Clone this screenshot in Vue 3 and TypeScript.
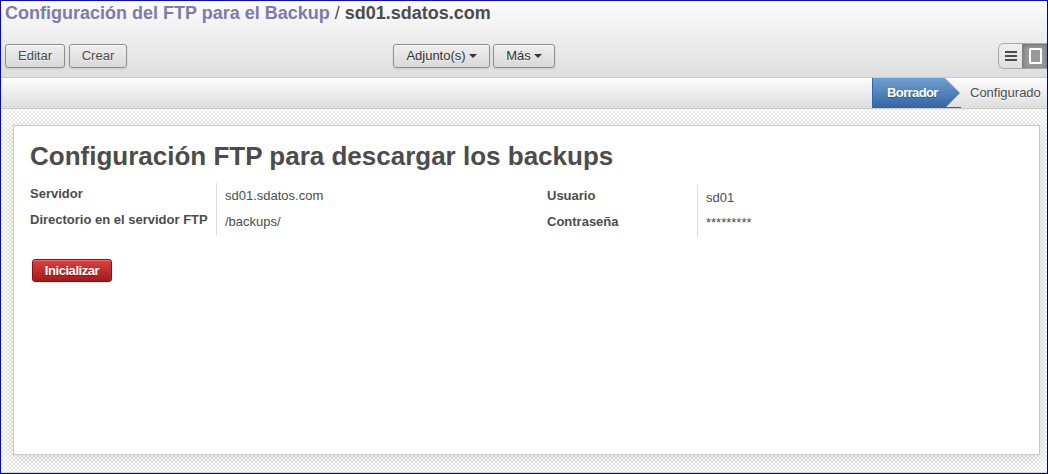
<script setup lang="ts">
interface Field { label: string; value: string; masked?: boolean }
interface Group { name: string; fields: Field[] }

const groups: Group[] = [
  {
    name: 'server',
    fields: [
      { label: 'Servidor', value: 'sd01.sdatos.com' },
      { label: 'Directorio en el servidor FTP', value: '/backups/' },
    ],
  },
  {
    name: 'user',
    fields: [
      { label: 'Usuario', value: 'sd01' },
      { label: 'Contraseña', value: '*********', masked: true },
    ],
  },
]
</script>

<template>
  <div class="window">
    <header class="header">
      <h2 class="crumbs">
        <a class="crumb-link">Configuración del FTP para el Backup</a>
        <span class="slash"> / </span><span>sd01.sdatos.com</span>
      </h2>
      <div class="toolbar">
        <div class="actions">
          <button class="btn edit">Editar</button>
          <button class="btn create">Crear</button>
        </div>
        <div class="menus">
          <button class="btn dark attach"><span>Adjunto(s)</span><i class="caret"></i></button>
          <button class="btn dark more"><span>Más</span><i class="caret"></i></button>
        </div>
        <div class="switcher">
          <span class="view list">
            <svg width="12" height="10" viewBox="0 0 12 10"><path d="M0 1h12M0 5h12M0 9h12" stroke="#4c4c4c" stroke-width="2" /></svg>
          </span>
          <span class="view form">
            <svg width="13" height="16" viewBox="0 0 13 16"><rect x="1" y="1" width="11" height="14" rx=".5" fill="none" stroke="#fff" stroke-width="2" /></svg>
          </span>
        </div>
      </div>
    </header>
    <div class="statusbar">
      <div class="stage active">
        <svg class="arrow" width="90" height="30" viewBox="0 0 90 30">
          <defs>
            <linearGradient id="stage" x1="0" y1="0" x2="0" y2="1">
              <stop offset="0" stop-color="#729fcf" />
              <stop offset="1" stop-color="#3465a4" />
            </linearGradient>
          </defs>
          <path d="M0 0H73L88 15L74 29H89V30H0Z" fill="url(#stage)" />
          <path d="M.5 0V30M0 29.5H89" stroke="#3465a4" fill="none" />
        </svg>
        <span class="stage-name">Borrador</span>
      </div>
      <div class="stage next">Configurado</div>
    </div>
    <main class="canvas">
      <section class="sheet">
        <h1>Configuración FTP para descargar los backups</h1>
        <div class="groups">
          <div v-for="g in groups" :key="g.name" class="group" :class="g.name">
            <div class="labels">
              <div v-for="f in g.fields" :key="f.label"><span>{{ f.label }}</span></div>
            </div>
            <div class="values">
              <div v-for="f in g.fields" :key="f.label" :class="{ masked: f.masked }">{{ f.value }}</div>
            </div>
          </div>
        </div>
        <button class="init">Inicializar</button>
      </section>
    </main>
  </div>
</template>

<style>
body { overflow: hidden; }
</style>

<style scoped>
* { box-sizing: border-box; }
.window {
  width: 1048px;
  height: 474px;
  overflow: hidden;
  border: 1px solid #00f;
  border-right-color: #0000a8;
  border-bottom-color: #0000a8;
  font: 13px/20px "Liberation Sans", Arial, sans-serif;
  color: #4c4c4c;
  display: flex;
  flex-direction: column;
}
.header {
  height: 77px;
  flex: none;
  border-bottom: 1px solid #cacaca;
  background: linear-gradient(#fcfcfc, #dedede);
}
.crumbs {
  margin: 0;
  padding: 2px 0 0 4px;
  height: 42px;
  font-size: 18px;
  line-height: 20px;
  white-space: nowrap;
}
.crumb-link { color: #7c7bad; }
.slash { font-weight: normal; white-space: pre; }
.toolbar {
  display: grid;
  grid-template-columns: 388px 1fr 50px;
  padding-left: 4px;
}
.actions, .menus { display: flex; gap: 4px; padding-top: 1px; }
.menus { gap: 3px; }
.btn {
  height: 24px;
  padding: 0;
  border: 1px solid #8e8e8e;
  border-radius: 3px;
  background: linear-gradient(#efefef, #d8d8d8);
  box-shadow: 0 1px 2px rgba(0, 0, 0, .12), inset 0 1px 1px rgba(255, 255, 255, .75);
  font: 13px/20px "Liberation Sans", Arial, sans-serif;
  color: #4c4c4c;
  text-shadow: 0 1px 1px rgba(255, 255, 255, .5);
  display: flex;
  align-items: center;
  justify-content: center;
  gap: 3px;
}
.edit { width: 60px; }
.create { width: 58px; }
.attach { width: 97px; }
.more { width: 62px; }
.dark { color: #333; }
.caret {
  border: 4px solid transparent;
  border-top-color: #333;
  border-bottom: 0;
}
.switcher {
  height: 26px;
  display: flex;
  border: 1px solid #a8a8a8;
  border-right: 0;
  border-radius: 6px 0 0 6px;
  overflow: hidden;
  margin-left: 1px;
}
.view { display: flex; align-items: center; justify-content: center; }
.list { width: 23px; background: linear-gradient(#efefef, #dfdfdf); }
.form {
  flex: 1;
  border-left: 1px solid #808080;
  background: #999;
  box-shadow: inset 0 1px 4px rgba(0, 0, 0, .3);
}
.statusbar {
  height: 31px;
  flex: none;
  display: flex;
  justify-content: flex-end;
  border-bottom: 1px solid #cacaca;
  background: linear-gradient(#fcfcfc, #dedede);
  line-height: 30px;
}
.active {
  width: 98px;
  display: grid;
  color: #fff;
  font-weight: bold;
  text-shadow: 0 1px 1px rgba(0, 0, 0, .3);
}
.arrow, .stage-name { grid-area: 1 / 1; }
.stage-name { padding-left: 15px; z-index: 1; letter-spacing: -.6px; }
.next { width: 77px; text-shadow: 0 1px 1px #fff; }
.canvas {
  flex: 1;
  padding: 16px 7px 0 12px;
  background: repeating-conic-gradient(#e9e9e9 0 25%, #fff 0 50%) 0 0 / 4px 4px;
  border-bottom: 1px solid #d5d5d5;
}
.sheet {
  height: 330px;
  padding: 15px 16px 0;
  border: 1px solid #c8c8d3;
  background: #fff;
  box-shadow: 0 4px 14px rgba(0, 0, 0, .12);
}
h1 {
  margin: 0;
  font-size: 26px;
  line-height: 30px;
  white-space: nowrap;
}
.groups { display: grid; grid-template-columns: 517px 1fr; margin-top: 12px; }
.group { display: grid; grid-template-columns: 186px 1fr; height: 52px; line-height: 26px; }
.user { grid-template-columns: 150px 1fr; margin-top: 2px; }
.labels { font-weight: bold; margin-top: -2px; }
.values { border-left: 1px solid #ddd; padding-left: 8px; }
.masked { line-height: 24px; }
.init {
  width: 80px;
  height: 23px;
  margin: 22px 0 0 2px;
  padding: 0;
  border: 1px solid #7b1414;
  border-radius: 3px;
  background: linear-gradient(#df3f3f, #a21a1a);
  box-shadow: 0 1px 2px rgba(0, 0, 0, .15), inset 0 1px 1px rgba(255, 255, 255, .3);
  color: #fff;
  font: bold 13px/20px "Liberation Sans", Arial, sans-serif;
  letter-spacing: -.45px;
  text-shadow: 0 1px 1px rgba(0, 0, 0, .3);
  display: block;
}
</style>
